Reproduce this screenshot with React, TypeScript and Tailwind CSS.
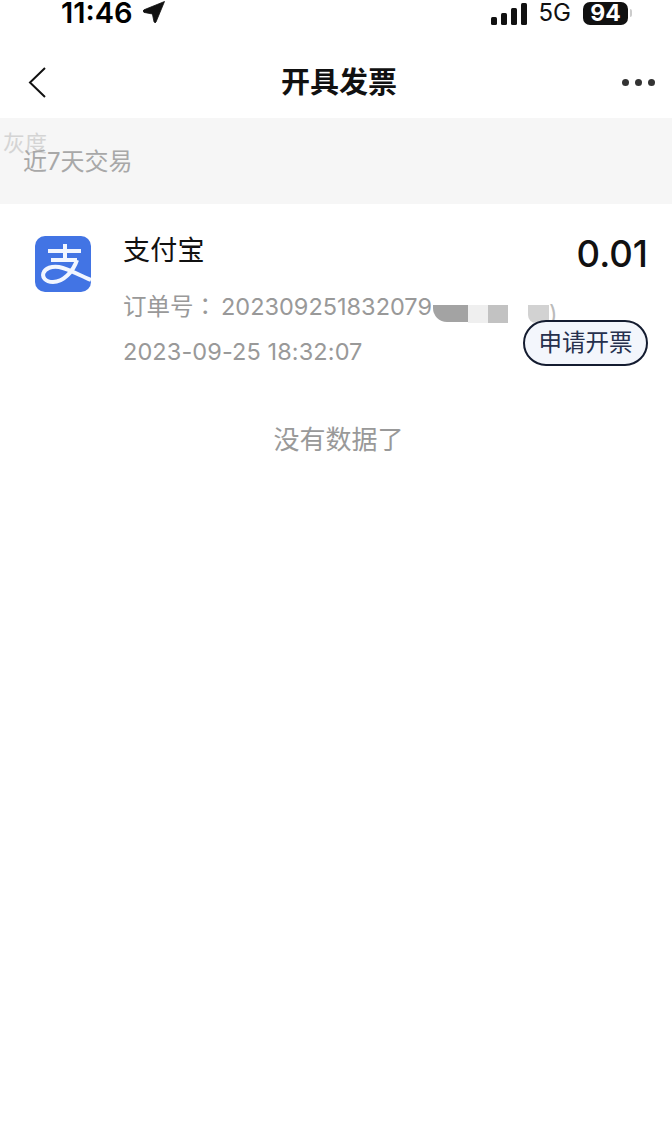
import React from 'react';

const sans = 'font-["Inter","Noto_Sans_CJK_SC",sans-serif]';

const StatusBar = () => (
  <div className="flex h-[26px] items-start justify-between pl-[61px] pr-[40px] text-black">
    <div className="flex items-center gap-[10px]">
      <span className="text-[29px] font-semibold leading-[26px]">11:46</span>
      <svg width="22" height="22" viewBox="0 0 22 22" className="mt-[-2px]">
        <path d="M21.5 0.5 L13 21 Q12 22.8 11 20.8 L9.4 13 L1 11.4 Q-0.8 10 1 8.8 Z" fill="#111" stroke="#111" strokeWidth="0.8" />
      </svg>
    </div>
    <div className="flex items-center">
      <svg width="36" height="22" viewBox="0 0 36 22" className="mt-[1px]">
        <rect x="0" y="14" width="6" height="8" rx="1.5" fill="#111" />
        <rect x="10" y="10" width="6" height="12" rx="1.5" fill="#111" />
        <rect x="20" y="5" width="6" height="17" rx="1.5" fill="#111" />
        <rect x="30" y="0" width="6" height="22" rx="1.5" fill="#111" />
      </svg>
      <span className="ml-[12px] text-[24px] leading-[26px] text-[#111]">5G</span>
      <div className="ml-[12px] flex items-center">
        <div className="flex h-[23px] w-[45px] items-center justify-center rounded-[7px] bg-[#111] text-[23px] font-bold leading-none text-white">
          94
        </div>
        <div className="ml-[2px] h-[8px] w-[2px] rounded-r-full bg-[#ccc]" />
      </div>
    </div>
  </div>
);

const NavBar = () => (
  <div className="flex h-[92px] items-center justify-between pl-[28px] pr-[17px] pt-[20px]">
    <svg width="18" height="31" viewBox="0 0 18 31" fill="none">
      <path d="M17 1 L2 15.5 L17 30" stroke="#111" strokeWidth="2" />
    </svg>
    <h1 className="ml-[10px] text-[29px] font-bold leading-none text-[#111]">开具发票</h1>
    <div className="flex gap-[6px]">
      <div className="h-[7px] w-[7px] rounded-full bg-[#333]" />
      <div className="h-[7px] w-[7px] rounded-full bg-[#333]" />
      <div className="h-[7px] w-[7px] rounded-full bg-[#333]" />
    </div>
  </div>
);

const AlipayLogo = () => (
  <svg width="56" height="56" viewBox="0 0 56 56" className="shrink-0">
    <defs>
      <clipPath id="logo-clip">
        <rect width="56" height="56" rx="10" />
      </clipPath>
    </defs>
    <rect width="56" height="56" rx="10" fill="#4274e4" />
    <g fill="none" stroke="#f2f6ff" strokeWidth="4" clipPath="url(#logo-clip)">
      <path d="M13 15 H46" />
      <path d="M30 8 V24" />
      <path d="M16 24 H42" />
      <path d="M42 24 C38 36 28 46 18 46 C10 46 7 41 8.5 37 C10 32 17 30 24 31 C34 33 44 39 56 44" />
    </g>
  </svg>
);

const Mosaic = () => (
  <div className="absolute left-[310px] top-[69px] flex h-[18px] items-start">
    <div className="h-[17px] w-[35px] rounded-bl-[14px] bg-[#a3a3a3]" />
    <div className="h-[18px] w-[20px] bg-[#efefef]" />
    <div className="h-[18px] w-[20px] bg-[#c2c2c2]" />
    <div className="h-[18px] w-[20px] bg-white" />
    <div className="h-[18px] w-[21px] rounded-bl-[8px] bg-[#d2d2d2]" />
  </div>
);

const OrderRow = () => (
  <div className="flex h-[178px] pl-[35px] pr-[24px] pt-[32px]">
    <AlipayLogo />
    <div className="relative ml-[32px] flex-1">
      <div className="text-[27px] tracking-[0.3px] leading-[30px] text-[#111]">支付宝</div>
      <div className="mt-[19px] whitespace-nowrap text-[23.5px] leading-[40px] text-[#999]">
        订单号<span className="mr-[4px] font-['Noto_Sans_CJK_TC']">：</span>202309251832079
      </div>
      <div className="mt-[5px] text-[23.5px] tracking-[0.1px] leading-[40px] text-[#999]">2023-09-25 18:32:07</div>
      <Mosaic />
      <span className="absolute left-[426px] top-[66px] text-[23.5px] leading-[24px] text-[#bbb]">)</span>
      <div className="absolute right-0 top-0 text-[36.5px] font-medium leading-[36px] text-[#111]">0.01</div>
      <button className="absolute right-0 top-[84px] flex h-[46px] w-[125px] items-center justify-center rounded-full border-2 border-[#141c30] bg-[#f3f6fc] text-[23.5px] text-[#26304d]">
        申请开票
      </button>
    </div>
  </div>
);

export default function App() {
  return (
    <div className={`h-[1123px] w-[672px] overflow-hidden bg-white ${sans}`}>
      <StatusBar />
      <NavBar />
      <div className="relative h-[86px] bg-[#f6f6f6] pl-[23px] pt-[26px]">
        <span className="absolute left-[3px] top-[12px] text-[22px] leading-[26px] text-[#d4d4d4]">灰度</span>
        <span className="relative text-[24px] leading-[36px] text-[#a8a8a8]">近7天交易</span>
      </div>
      <OrderRow />
      <div className="ml-[5px] mt-[40px] text-center text-[26px] leading-[36px] text-[#999]">没有数据了</div>
    </div>
  );
}
